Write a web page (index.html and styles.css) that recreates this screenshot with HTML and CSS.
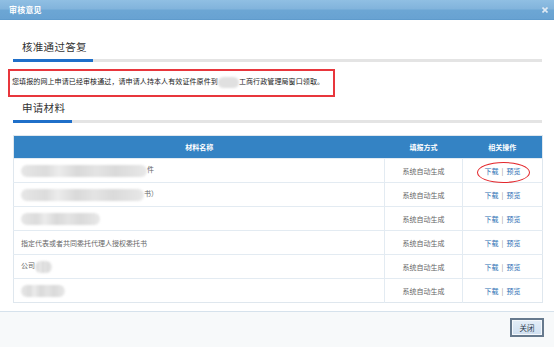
FILE: index.html
```html
<!DOCTYPE html>
<html lang="zh-CN">
<head>
<meta charset="utf-8">
<title>审核意见</title>
<link rel="stylesheet" href="styles.css">
</head>
<body>
<div class="dialog">
  <div class="titlebar">
    <span class="title">审核意见</span>
    <svg class="close" width="6" height="6" viewBox="0 0 6 6"><path d="M0.5 0.5L5.5 5.5M5.5 0.5L0.5 5.5" stroke="#dfeaf4" stroke-width="1.6"/></svg>
  </div>
  <div class="content">
    <h2 class="sec-title">核准通过答复</h2>
    <div class="sec-bar"><div class="sec-bar-blue w1"></div></div>
    <div class="notice">您填报的网上申请已经审核通过，请申请人持本人有效证件原件到<span class="blur b-notice"></span>工商行政管理局窗口领取。</div>
    <h2 class="sec-title second">申请材料</h2>
    <div class="sec-bar"><div class="sec-bar-blue w2"></div></div>
    <table class="grid">
      <colgroup><col class="c1"><col class="c2"><col class="c3"></colgroup>
      <thead>
        <tr><th>材料名称</th><th>填报方式</th><th>相关操作</th></tr>
      </thead>
      <tbody>
        <tr><td class="name"><span class="blur" style="width:126px"></span>件</td><td class="mode">系统自动生成</td><td class="ops circled"><a>下载</a><span class="sep">|</span><a>预览</a><span class="ring"></span></td></tr>
        <tr><td class="name"><span class="blur" style="width:123px"></span>书）</td><td class="mode">系统自动生成</td><td class="ops"><a>下载</a><span class="sep">|</span><a>预览</a></td></tr>
        <tr><td class="name"><span class="blur" style="width:79px"></span></td><td class="mode">系统自动生成</td><td class="ops"><a>下载</a><span class="sep">|</span><a>预览</a></td></tr>
        <tr><td class="name">指定代表或者共同委托代理人授权委托书</td><td class="mode">系统自动生成</td><td class="ops"><a>下载</a><span class="sep">|</span><a>预览</a></td></tr>
        <tr><td class="name">公司<span class="blur" style="width:17px"></span></td><td class="mode">系统自动生成</td><td class="ops"><a>下载</a><span class="sep">|</span><a>预览</a></td></tr>
        <tr><td class="name"><span class="blur" style="width:44px"></span></td><td class="mode">系统自动生成</td><td class="ops"><a>下载</a><span class="sep">|</span><a>预览</a></td></tr>
      </tbody>
    </table>
  </div>
  <div class="footer">
    <button class="btn">关闭</button>
  </div>
</div>
</body>
</html>
```

FILE: styles.css
```css
* { box-sizing: border-box; }
html, body { margin: 0; padding: 0; }
body {
  font-family: "Noto Sans CJK SC", "Liberation Sans", sans-serif;
  background: #ffffff;
}
.dialog {
  width: 554px;
  height: 347px;
  display: flex;
  flex-direction: column;
  background: #fdfefe;
}
.titlebar {
  height: 20px;
  flex: none;
  display: flex;
  align-items: center;
  justify-content: space-between;
  padding: 0 6px 0 9px;
  background: linear-gradient(#90bfe3 0%, #82b4dc 45%, #6ca6d4 55%, #68a2d2 100%);
  border-bottom: 1px solid #5f9bcc;
}
.title {
  color: #fff;
  font-size: 8px;
  font-weight: bold;
  letter-spacing: 0.2px;
}
.close { display: block; }
.content {
  flex: 1;
  padding: 20px 12px 0 13px;
  background: #ffffff;
}
.sec-title {
  margin: 0 0 0 9px;
  font-size: 10.5px;
  line-height: 14px;
  height: 14px;
  font-weight: normal;
  color: #333;
  letter-spacing: 0.3px;
}
.sec-title.second { margin-top: 4px; }
.sec-bar {
  margin-top: 5px;
  height: 3px;
  background: #e4e4e4;
}
.sec-bar-blue { height: 3px; background: #1f6fc9; }
.w1 { width: 80px; }
.w2 { width: 59px; }
.notice {
  margin: 7px 0 0 -5px;
  width: 327px;
  height: 28px;
  border: 2px solid #e8363c;
  padding: 5px 0 0 2px;
  font-size: 7px;
  line-height: 10px;
  letter-spacing: 0.1px;
  color: #222;
  white-space: nowrap;
}
.blur {
  display: inline-block;
  vertical-align: middle;
  height: 12px;
  border-radius: 6px;
  background: linear-gradient(90deg, #e6e6e6 0%, #dcdcdc 20%, #ececec 30%, #d9d9d9 45%, #e4e4e4 60%, #dadada 75%, #e8e8e8 100%);
  filter: blur(0.8px);
}
.b-notice { width: 21px; height: 11px; background: #e0e0e0; }
.grid {
  margin-top: 12px;
  width: 529px;
  border-collapse: collapse;
  table-layout: fixed;
  border: 1px solid #dfe7ee;
}
.c1 { width: 371px; }
.c2 { width: 78px; }
.c3 { width: 80px; }
.grid th {
  height: 23px;
  background: #3483c4;
  color: #fff;
  font-size: 7px;
  font-weight: bold;
  padding: 0;
  border: none;
}
.grid td {
  height: 24px;
  font-size: 7px;
  color: #666;
  padding: 0;
  border-top: 1px solid #e3ebf2;
  border-left: 1px solid #e3ebf2;
}
.grid td.name { padding-left: 7px; border-left: none; }
.grid td.mode { text-align: center; }
.grid td.ops { text-align: center; color: #2d6fb4; }
.ops a { color: #2d6fb4; }
.sep { color: #888; margin: 0 3px; }
.circled { position: relative; }
.ring {
  position: absolute;
  left: 14px;
  top: 3px;
  width: 53px;
  height: 21px;
  border: 1.5px solid #e3262b;
  border-radius: 50%;
}
.footer {
  flex: none;
  height: 36px;
  border-top: 1px solid #d6e2ec;
  background: #f7f9fa;
  display: flex;
  justify-content: flex-end;
  align-items: flex-start;
  padding: 6px 10px 0 0;
}
.btn {
  width: 34px;
  height: 19px;
  padding: 0;
  font-family: "Noto Sans CJK SC", sans-serif;
  font-size: 7.5px;
  color: #2b3a4a;
  background: linear-gradient(#e4eef8, #cfdff0);
  border: 2px solid #66798d;
  box-shadow: inset 0 0 0 1px #f4f8fc;
}
```
